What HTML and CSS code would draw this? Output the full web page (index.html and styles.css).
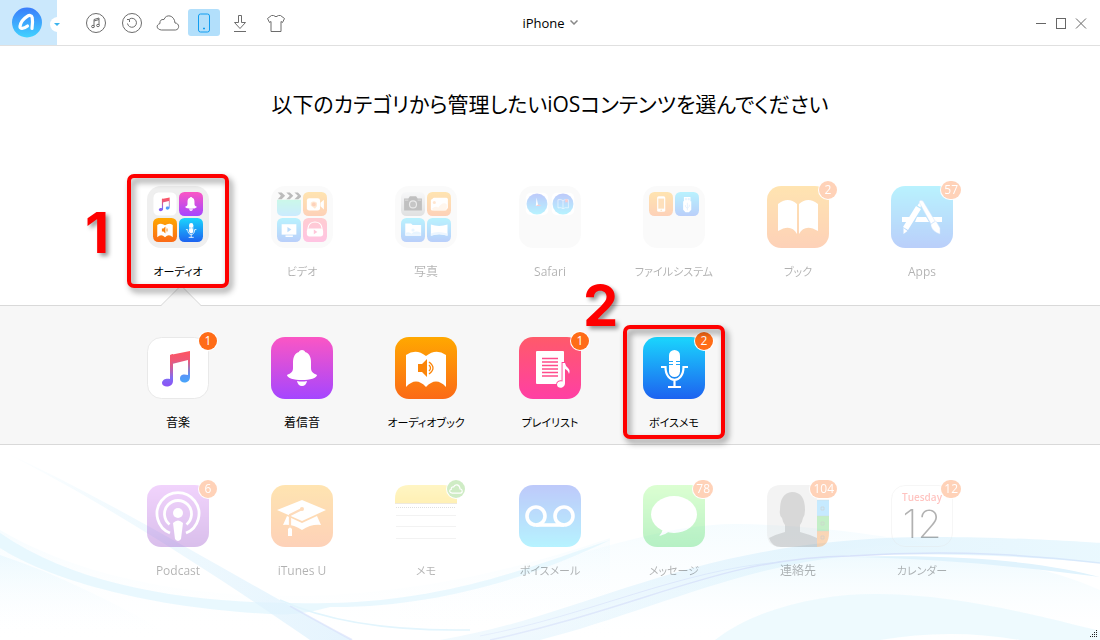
FILE: index.html
```html
<!DOCTYPE html>
<html lang="ja">
<head>
<meta charset="utf-8">
<meta name="viewport" content="width=device-width, initial-scale=1">
<title>iPhone</title>
<link rel="stylesheet" href="styles.css">
</head>
<body>
<svg class="sprite" aria-hidden="true">
  <defs>
    <linearGradient id="g-orange" x2="0" y2="1"><stop stop-color="#ffa800"/><stop offset="1" stop-color="#fb6a17"/></linearGradient>
    <linearGradient id="g-blue" x2="0" y2="1"><stop stop-color="#1ad6fd"/><stop offset="1" stop-color="#1d62f0"/></linearGradient>
    <linearGradient id="g-blue-up" x2="0" y2="1"><stop stop-color="#2a50f0"/><stop offset="1" stop-color="#12d8ff"/></linearGradient>
    <linearGradient id="g-magenta" x2="0" y2="1"><stop stop-color="#fb56c4"/><stop offset="1" stop-color="#a546ff"/></linearGradient>
    <linearGradient id="g-pink" x2="0" y2="1"><stop stop-color="#ff5a6a"/><stop offset="1" stop-color="#ff3fa4"/></linearGradient>
    <linearGradient id="g-purple" x2="0" y2="1"><stop stop-color="#d371f8"/><stop offset="1" stop-color="#832cbf"/></linearGradient>
    <linearGradient id="g-green" x2="0" y2="1"><stop stop-color="#8cff6c"/><stop offset="1" stop-color="#1ed440"/></linearGradient>
    <linearGradient id="g-gray" x2="0" y2="1"><stop stop-color="#e6e8ea"/><stop offset="1" stop-color="#9b9c9e"/></linearGradient>
    <linearGradient id="g-mint" x2="0" y2="1"><stop stop-color="#55e9b8"/><stop offset="1" stop-color="#55bfff"/></linearGradient>
    <linearGradient id="g-yellow" x2="0" y2="1"><stop stop-color="#ffe03e"/><stop offset="1" stop-color="#ffcf0a"/></linearGradient>
    <linearGradient id="g-note" gradientUnits="userSpaceOnUse" x1="31" y1="14" x2="31" y2="48"><stop stop-color="#ff5560"/><stop offset=".35" stop-color="#ee5878"/><stop offset=".8" stop-color="#7f6cf4"/><stop offset="1" stop-color="#8a55f5"/></linearGradient>
    <linearGradient id="g-note2" gradientUnits="userSpaceOnUse" x1="40" y1="14" x2="40" y2="46"><stop stop-color="#ff5560"/><stop offset=".3" stop-color="#ee5878"/><stop offset=".75" stop-color="#5a94f8"/><stop offset="1" stop-color="#45a6fa"/></linearGradient>
    <linearGradient id="g-logo" x2="0" y2="1"><stop stop-color="#3a7cfb"/><stop offset="1" stop-color="#42d2ff"/></linearGradient>
  </defs>
  <symbol id="music" viewBox="0 0 62 62">
    <rect x=".5" y=".5" width="61" height="61" rx="14" fill="#fff" stroke="#e9e9e9"/>
    <path d="M23 18l3-1v27c0 7-11 7-11 2 0-4 5-5 8-4z" fill="url(#g-note)"/>
    <path d="M23 18l20-4v26c0 7-10 7-10 2s4-5 8-4V23l-16 4z" fill="url(#g-note2)"/>
  </symbol>
  <symbol id="bell" viewBox="0 0 62 62">
    <rect width="62" height="62" rx="14" fill="url(#g-magenta)"/>
    <path d="M31 13c-2 0-3 1-3 2-4 1-6 5-6 10v6c0 4-2 5-6 7 0 3 7 5 15 5s15-2 15-5c-4-2-6-3-6-7v-6c0-5-2-9-6-10 0-1-1-2-3-2zM26 44q5 1 10 0-1 5-5 5t-5-5z" fill="#fff"/>
  </symbol>
  <symbol id="audiobook" viewBox="0 0 62 62">
    <rect width="62" height="62" rx="14" fill="url(#g-orange)"/>
    <path d="M11 18q10-7 20 1 10-8 20-1v32q-10-11-20 0-10-11-20 0z" fill="#fff"/>
    <path d="M23 27h4l5-5v18l-5-5h-4z" fill="#fb8509"/>
    <path d="M34 28q3 3 0 6M34 25q8 6 0 12" fill="none" stroke="#fb8509" stroke-width="1.3"/>
  </symbol>
  <symbol id="playlist" viewBox="0 0 62 62">
    <rect width="62" height="62" rx="14" fill="url(#g-pink)"/>
    <rect x="17" y="14" width="28" height="33" rx="1" fill="#fff"/>
    <path d="M23 21.500h16M23 25h16M23 28.500h16M23 32h16M23 35.500h16M23 39h16" stroke="#ff4c8b" stroke-width="1.300"/>
    <path d="M43.500 26h2.500q.5 3 3 5t1 6q-1-4-4-5v14c0 6-8 6-8 1.500 0-3 3-4 5.500-3z" fill="#fff" stroke="#ff4595" stroke-width="1.800" paint-order="stroke"/>
  </symbol>
  <symbol id="mic" viewBox="0 0 62 62">
    <rect width="62" height="62" rx="14" fill="url(#g-blue)"/>
    <rect x="26" y="13" width="11" height="27" rx="5.500" fill="#fff"/>
    <path d="M26 24.500h4M33 24.500h4M26 27.500h4M33 27.500h4" stroke="#1da5f8"/>
    <path d="M18 30h4.500c0 17 18 17 18 0H45M31.500 43v7M25 50h13" fill="none" stroke="#fff" stroke-width="2.200"/>
  </symbol>
  <symbol id="clapper" viewBox="0 0 62 62">
    <path d="M0 20h62v28q0 14-14 14H14Q0 62 0 48z" fill="url(#g-mint)"/>
    <path d="M2 1h10l9 9-9 9H2l8-9zM24 1h9l9 9-9 9h-9l9-9zM45 1h9l8 9v3l-7 6H45l9-9z" fill="#222"/>
  </symbol>
  <symbol id="camcorder" viewBox="0 0 62 62">
    <rect width="62" height="62" rx="14" fill="url(#g-orange)"/>
    <rect x="10" y="16" width="34" height="32" rx="6" fill="#fff"/><path d="M45 28l9-8v25l-9-8z" fill="#fff"/>
    <path d="M20 28q7-7 16 0v8l-5 7-11-8z" fill="#ffb770"/><circle cx="28" cy="32" r="5" fill="#fa6b20"/>
  </symbol>
  <symbol id="tv" viewBox="0 0 62 62">
    <rect width="62" height="62" rx="14" fill="url(#g-blue)"/>
    <rect x="12" y="16" width="38" height="27" fill="#fff"/><path d="M22 45h19v4H22z" fill="#fff"/><path d="M27 23l10 7-10 7z" fill="#1d8cf5"/>
  </symbol>
  <symbol id="headphones" viewBox="0 0 62 62">
    <rect width="62" height="62" rx="14" fill="url(#g-pink)"/>
    <path d="M13 39V26C15 5 47 5 49 26v13" fill="none" stroke="#fff" stroke-width="3"/>
    <rect x="10" y="27" width="42" height="21" rx="7" fill="#fff"/><path d="M28 30l9 6-9 6z" fill="#ff4688"/>
  </symbol>
  <symbol id="camera" viewBox="0 0 62 62">
    <rect width="62" height="62" rx="14" fill="url(#g-gray)"/>
    <path d="M8 17h11l4-6h16l4 6h11v31H8z" fill="#333"/><circle cx="31" cy="32" r="9" fill="#444" stroke="#bbb" stroke-width="3"/><path d="M10 21h9M43 21h9" stroke="#aaa" stroke-width="2"/>
  </symbol>
  <symbol id="photos" viewBox="0 0 62 62">
    <rect width="62" height="62" rx="14" fill="url(#g-orange)"/>
    <rect x="14" y="15" width="40" height="29" rx="4" fill="#fff"/><rect x="10" y="18" width="41" height="30" rx="4" fill="#fff"/>
    <path d="M12 44q11-10 17-3 12-18 22-9v9q0 6-6 6H18z" fill="#ffe2c4"/><circle cx="19" cy="27" r="4" fill="#ffb06a"/>
  </symbol>
  <symbol id="album" viewBox="0 0 62 62">
    <rect width="62" height="62" rx="14" fill="url(#g-blue)"/>
    <path d="M11 14h15l4 4h22v28H11z" fill="#fff"/><path d="M13 38q8-4 14 3 9-10 24-3v5H13z" fill="#b5e0ff"/><circle cx="31" cy="31" r="4" fill="#b5e0ff"/>
  </symbol>
  <symbol id="panorama" viewBox="0 0 62 62">
    <rect width="62" height="62" rx="14" fill="url(#g-blue)"/>
    <path d="M10 17q21 7 43 0v29q-22-8-43 0z" fill="#fff"/><path d="M10 40q16-8 43 0v6q-22-8-43 0z" fill="#c4e4ff"/>
  </symbol>
  <symbol id="compass" viewBox="0 0 62 62">
    <rect x="2" y="2" width="58" height="58" rx="13" fill="#fff"/><circle cx="31" cy="31" r="27" fill="url(#g-blue-up)"/>
    <circle cx="31" cy="31" r="26" fill="none" stroke="#fff" stroke-opacity=".6" stroke-dasharray="1 4"/><path d="M28 36l2-21 4 20z" fill="#fff"/><path d="M28 36l6-4 9 3-12 1z" fill="#ff5555"/>
  </symbol>
  <symbol id="bookmark" viewBox="0 0 62 62">
    <rect x="2" y="2" width="58" height="58" rx="13" fill="#fff"/><circle cx="31" cy="31" r="27" fill="url(#g-blue-up)"/>
    <path d="M18 20q8-2 13 2 6-4 14-2v21q-8-2-14 2-5-4-13-2zM31 22v21" fill="none" stroke="#fff" stroke-opacity=".7" stroke-width="2"/><path d="M37 19h6v9l-3-3-3 3z" fill="#ff5555"/>
  </symbol>
  <symbol id="phone" viewBox="0 0 62 62">
    <rect width="62" height="62" rx="14" fill="url(#g-orange)"/><rect x="21" y="11" width="21" height="40" rx="4" fill="#fff"/><path d="M24 17h15v26H24z" fill="#fc9c25"/><circle cx="31.500" cy="47" r="2" fill="#fc9c25"/>
  </symbol>
  <symbol id="usb" viewBox="0 0 62 62">
    <rect width="62" height="62" rx="14" fill="url(#g-blue)"/><path d="M23 13h17v11h2v22l-6 6h-9l-6-6V24h2z" fill="#fff"/><path d="M27 17h3v3h-3zM34 17h3v3h-3zM32 28v19M27 34v4l5 4 5-5v-4" fill="none" stroke="#9fcdfa" stroke-width="2"/>
  </symbol>
  <symbol id="book" viewBox="0 0 62 62">
    <rect width="62" height="62" rx="14" fill="url(#g-orange)"/>
    <path d="M11 18q10-8 19 0v30q-6-11-19-3zM32 18q9-8 19 0v27q-13-8-19 3z" fill="#fff"/>
  </symbol>
  <symbol id="apps" viewBox="0 0 62 62">
    <rect width="62" height="62" rx="14" fill="url(#g-blue)"/>
    <path d="M11 31h12l-2 5H11zM26 31h9l3 5H24zM39 31h12v5h-9z" fill="#fff"/>
    <path d="M25 20l5 3-13 21-5-3zM12.500 42l4 3-4 3zM26.500 19.500l2-3 2 1-1 4z" fill="#fff"/>
    <path d="M28 16q1-3 4-1l12 20-4 3zM40 38l5-3 4 7v6q-7-2-9-8z" fill="#fff" stroke="#6caaf8" stroke-width=".5"/>
  </symbol>
  <symbol id="podcast" viewBox="0 0 62 62">
    <rect width="62" height="62" rx="14" fill="url(#g-purple)"/>
    <path d="M23 48a21 21 0 1 1 16 0M22.500 39.500a13.500 13.500 0 1 1 17 0" fill="none" stroke="#fff" stroke-width="2.800"/>
    <circle cx="31" cy="28" r="5" fill="#fff"/><path d="M26 38q5-5 10 0l-2 16q-3 4-6 0z" fill="#fff"/>
  </symbol>
  <symbol id="itunesu" viewBox="0 0 62 62">
    <rect width="62" height="62" rx="14" fill="url(#g-orange)"/>
    <path d="M6 25l25-10 24 10-24 11zM12 40l4-9 15 7 15-7 4 9q-10-1-19 5-9-6-19-5z" fill="#fff"/>
    <path d="M31 24l-12 6v13" fill="none" stroke="#fc8c20" stroke-width="2.200"/><circle cx="31" cy="24" r="2" fill="#fc8c20"/><path d="M17 44q2-3 4 0v7h-4z" fill="#fff"/>
  </symbol>
  <symbol id="notes" viewBox="0 0 62 62">
    <path d="M14 0h34q14 0 14 14v34q0 14-14 14H14Q0 62 0 48V14Q0 0 14 0z" fill="#fff"/>
    <path d="M14 0h34q14 0 14 14v5H0v-5Q0 0 14 0z" fill="url(#g-yellow)"/>
    <path d="M0 18.500h62" stroke="#c9b890"/><path d="M1 22.500h60" stroke="#999" stroke-dasharray="1 1"/><path d="M1 30.500h60M1 41.500h60M1 53.500h60" stroke="#d5d5d5"/>
  </symbol>
  <symbol id="voicemail" viewBox="0 0 62 62">
    <rect width="62" height="62" rx="14" fill="url(#g-blue-up)"/>
    <circle cx="17" cy="31" r="9" fill="none" stroke="#fff" stroke-width="3.600"/><circle cx="45" cy="31" r="9" fill="none" stroke="#fff" stroke-width="3.600"/><path d="M17 40h28" stroke="#fff" stroke-width="3.600"/>
  </symbol>
  <symbol id="message" viewBox="0 0 62 62">
    <rect width="62" height="62" rx="14" fill="url(#g-green)"/>
    <ellipse cx="31" cy="29.500" rx="23" ry="18.500" fill="#fff"/><path d="M20 44q-1 4-4 7 6-1 11-5z" fill="#fff"/>
  </symbol>
  <symbol id="contact" viewBox="0 0 62 62">
    <path d="M14 0h34q2 0 2 2v60H14Q0 62 0 48V14Q0 0 14 0z" fill="#d8d8d8"/>
    <path d="M2 53q8-4 16-6v-7q-2-2-3-7-3-3-2-8 0-17 12-18 13 0 13 18 0 5-2 8-1 5-3 7v7q8 2 17 6v9H14Q5 62 2 53z" fill="#808080"/>
    <path d="M50 15h12v16H50z" fill="#45bdff"/><path d="M50 31h12v15H50z" fill="#40cc48"/><path d="M50 46h12v2q0 14-12 14z" fill="#ff7d10"/>
    <path d="M50 15h12M50 31h12M50 46h12" stroke="#777" stroke-opacity=".4"/><path d="M54 22h3v3h-3zM54 37h3v3h-3zM54 51h3v3h-3z" fill="none" stroke="#666" stroke-opacity=".6"/>
  </symbol>
</svg>

<header class="topbar">
  <div class="topbar-left">
    <button class="brand" type="button" aria-label="メニュー">
      <svg width="57" height="45" viewBox="0 0 57 45">
        <circle cx="27" cy="22.500" r="15" fill="url(#g-logo)"/>
        <path d="M32 28.500c.6-4 .8-8 .2-11-.5-2.500-3-2.500-5-1.200-3.500 2.200-6.700 6.500-7.200 10-.3 3 3.500 2.800 7.500-.3" fill="none" stroke="#fff" stroke-width="3.200" stroke-linecap="round" stroke-linejoin="round"/>
        <circle cx="57.500" cy="24.500" r="7.500" fill="#fff"/>
      </svg>
      <span class="brand-caret"></span>
    </button>
    <nav class="tools" aria-label="ツール">
      <button class="tool" type="button" aria-label="音楽"><svg viewBox="0 0 24 24"><circle cx="12" cy="12" r="9.500"/><path d="M10 15.500V8.500l5-1.500v7M10 10l5-1.500"/><ellipse cx="9" cy="15.500" rx="1.400" ry="1.200"/><ellipse cx="14" cy="14.500" rx="1.400" ry="1.200"/></svg></button>
      <button class="tool" type="button" aria-label="履歴"><svg viewBox="0 0 24 24"><circle cx="12" cy="12" r="9.500"/><path d="M7.500 12.500a4.500 4.500 0 1 0 2-4.500M7 8.500h2.500V11"/></svg></button>
      <button class="tool" type="button" aria-label="クラウド"><svg viewBox="0 0 24 24"><path d="M5.500 19h14c4.500-.5 4-7-.5-7C18.500 4 10 2.500 8 8.500 5 8 3.500 10 4 12.500-.500 14 .5 18.500 5.500 19z"/></svg></button>
      <button class="tool tool-active" type="button" aria-label="デバイス" aria-pressed="true"><svg viewBox="0 0 24 24"><rect x="6.500" y="3" width="11" height="18" rx="2"/><path d="M11.500 17h1v1h-1z"/></svg></button>
      <button class="tool" type="button" aria-label="ダウンロード"><svg viewBox="0 0 24 24"><path d="M10.500 4.500h3v7h4L12 17.500l-5.500-6h4zM6 20.500h12"/></svg></button>
      <button class="tool" type="button" aria-label="テーマ"><svg viewBox="0 0 24 24"><path d="M7.500 4.500h2q2.500 2.500 5 0h2l4 3-2 4-1.500-1v10H7v-10l-1.500 1-2-4z"/></svg></button>
    </nav>
  </div>
  <button class="device" type="button">iPhone <svg width="8" height="5" viewBox="0 0 8 5"><path d="M.500.500L4 4 7.500.500" fill="none" stroke="#888" stroke-width="1.500"/></svg></button>
  <div class="window-controls">
    <button type="button" aria-label="最小化"><svg viewBox="0 0 12 12"><path d="M1 6.500h10"/></svg></button>
    <button type="button" aria-label="最大化"><svg viewBox="0 0 12 12"><rect x="1.500" y="1.500" width="9" height="10"/></svg></button>
    <button type="button" aria-label="閉じる"><svg viewBox="0 0 12 12"><path d="M1 1.500l10 10M11 1.500l-10 10"/></svg></button>
  </div>
</header>

<main class="content">
  <svg class="waves" viewBox="0 0 1100 190" preserveAspectRatio="none" aria-hidden="true">
    <defs>
      <linearGradient id="w1" x2="0" y2="1"><stop stop-color="#dff5fe"/><stop offset="1" stop-color="#fff" stop-opacity="0"/></linearGradient>
      <linearGradient id="w2"><stop stop-color="#d5f1fd" stop-opacity="0"/><stop offset=".4" stop-color="#dff3fd" stop-opacity=".6"/><stop offset="1" stop-color="#dff1fd"/></linearGradient>
      <linearGradient id="w3"><stop stop-color="#e0f3fd" stop-opacity=".5"/><stop offset=".6" stop-color="#e0f3fd"/><stop offset="1" stop-color="#e6f7fe"/></linearGradient>
      <linearGradient id="w4"><stop stop-color="#d3dcf9" stop-opacity=".6"/><stop offset=".6" stop-color="#d3dcf9"/><stop offset="1" stop-color="#d3e6fb"/></linearGradient>
    </defs>
    <path d="M0 80C110 145 330 185 610 88V190H0z" fill="url(#w1)" opacity=".25"/>
    <path d="M0 105C60 125 120 155 180 190H0z" fill="url(#w1)" opacity=".5"/>
    <path d="M0 83C90 145 220 155 330 153 450 150 530 117 610 90 540 124 440 158 330 157 300 165 285 165 270 164 150 158 50 130 0 98z" fill="#e4f6fe" opacity=".8"/>
    <path d="M0 0C120 55 240 130 352 190H310C230 135 110 55 0 0z" fill="url(#w2)" opacity=".8"/>
    <path d="M290 156Q315 170 352 190" fill="none" stroke="#d5ddfa" stroke-width="2" opacity=".6"/>
    <path d="M280 150Q350 182 470 180" fill="none" stroke="#e2f5fd" stroke-width="1.500"/>
    <path d="M400 150C550 120 650 72 740 74 820 76 870 84 930 94 760 95 600 158 400 190z" fill="url(#w1)" opacity=".3"/>
    <path d="M440 190C590 165 690 90 920 87 1000 86 1100 93 1100 93V113C1030 107 960 102 850 106 740 116 640 165 540 190z" fill="url(#w3)" opacity=".85"/>
    <path d="M460 190C650 155 720 108 850 106 1000 107 1040 115 1100 140V190z" fill="url(#w1)" opacity=".5"/>
    <path d="M850 107C980 103 1060 116 1100 127 1030 118 940 108 850 107z" fill="#e0f3fd"/>
    <path d="M490 190C650 155 720 108 850 106 960 99 1040 106 1100 113" fill="none" stroke="url(#w4)" stroke-width="1.500" opacity=".8"/>
    <path d="M480 186C590 165 680 120 780 112" fill="none" stroke="url(#w4)" opacity=".6"/>
    <path d="M715 190C760 155 830 143 880 144 960 145 1040 166 1100 181V190H1020Q950 178 880 190z" fill="#ecf9fe" opacity=".9"/>
  </svg>

  <h1 class="heading">以下のカテゴリから管理したいiOSコンテンツを選んでください</h1>

  <section class="row row-first">
    <button class="item item-open" type="button"><span class="tile folder"><svg><use href="#music"/></svg><svg><use href="#bell"/></svg><svg><use href="#audiobook"/></svg><svg><use href="#mic"/></svg></span><span class="label kana">オーディオ</span>
      <svg class="pointer" width="40" height="21" viewBox="0 0 40 21"><path d="M0 21L20 0l20 21z" fill="#f7f7f7"/><path d="M0 20.500L20 .500l20 20" fill="none" stroke="#d5d5d5"/></svg>
      <span class="mark"></span><span class="step step-one">1</span></button>
    <button class="item faded" type="button"><span class="tile folder"><svg><use href="#clapper"/></svg><svg><use href="#camcorder"/></svg><svg><use href="#tv"/></svg><svg><use href="#headphones"/></svg></span><span class="label kana">ビデオ</span></button>
    <button class="item faded" type="button"><span class="tile folder"><svg><use href="#camera"/></svg><svg><use href="#photos"/></svg><svg><use href="#album"/></svg><svg><use href="#panorama"/></svg></span><span class="label">写真</span></button>
    <button class="item faded" type="button"><span class="tile folder"><svg><use href="#compass"/></svg><svg><use href="#bookmark"/></svg></span><span class="label">Safari</span></button>
    <button class="item faded" type="button"><span class="tile folder"><svg><use href="#phone"/></svg><svg><use href="#usb"/></svg></span><span class="label kana">ファイルシステム</span></button>
    <button class="item faded" type="button"><span class="tile"><svg><use href="#book"/></svg><span class="badge">2</span></span><span class="label kana">ブック</span></button>
    <button class="item faded" type="button"><span class="tile"><svg><use href="#apps"/></svg><span class="badge">57</span></span><span class="label">Apps</span></button>
  </section>

  <section class="panel">
    <div class="row">
      <button class="item" type="button"><span class="tile"><svg><use href="#music"/></svg><span class="badge">1</span></span><span class="label">音楽</span></button>
      <button class="item" type="button"><span class="tile"><svg><use href="#bell"/></svg></span><span class="label">着信音</span></button>
      <button class="item" type="button"><span class="tile"><svg><use href="#audiobook"/></svg></span><span class="label kana">オーディオブック</span></button>
      <button class="item" type="button"><span class="tile"><svg><use href="#playlist"/></svg><span class="badge">1</span></span><span class="label kana">プレイリスト</span></button>
      <button class="item" type="button"><span class="tile"><svg><use href="#mic"/></svg><span class="badge">2</span></span><span class="label kana">ボイスメモ</span><span class="mark"></span><span class="step step-two">2</span></button>
    </div>
  </section>

  <section class="row row-last">
    <button class="item faded" type="button"><span class="tile"><svg><use href="#podcast"/></svg><span class="badge">6</span></span><span class="label">Podcast</span></button>
    <button class="item faded" type="button"><span class="tile"><svg><use href="#itunesu"/></svg></span><span class="label">iTunes U</span></button>
    <button class="item faded" type="button"><span class="tile"><svg><use href="#notes"/></svg><span class="badge badge-cloud"><svg viewBox="0 0 24 24"><path d="M5.500 19h14c4.500-.5 4-7-.5-7C18.500 4 10 2.500 8 8.500 5 8 3.500 10 4 12.500-.500 14 .5 18.500 5.500 19z" fill="none" stroke="#fff" stroke-width="2"/></svg></span></span><span class="label kana">メモ</span></button>
    <button class="item faded" type="button"><span class="tile"><svg><use href="#voicemail"/></svg></span><span class="label kana">ボイスメール</span></button>
    <button class="item faded" type="button"><span class="tile"><svg><use href="#message"/></svg><span class="badge">78</span></span><span class="label kana">メッセージ</span></button>
    <button class="item faded" type="button"><span class="tile"><svg><use href="#contact"/></svg><span class="badge">104</span></span><span class="label">連絡先</span></button>
    <button class="item faded" type="button"><span class="tile calendar"><span class="weekday">Tuesday</span><span class="day">12</span><span class="badge">12</span></span><span class="label kana">カレンダー</span></button>
  </section>
  <svg class="grip" width="8" height="8" viewBox="0 0 8 8" aria-hidden="true"><path d="M6 0h1v1H6zM6 2h1v1H6zM4 2h1v1H4zM6 4h1v1H6zM4 4h1v1H4zM2 4h1v1H2zM6 6h1v1H6zM4 6h1v1H4zM2 6h1v1H2zM0 6h1v1H0z" fill="#222"/></svg>
</main>
</body>
</html>
```
FILE: styles.css
```css
* { box-sizing: border-box; }

body {
  margin: 0;
  min-height: 100vh;
  display: flex;
  flex-direction: column;
  background: #fff;
  color: #000;
  font-family: "Open Sans", "Noto Sans CJK JP", sans-serif;
  font-size: 12px;
}

button {
  padding: 0;
  border: 0;
  background: none;
  color: inherit;
  font: inherit;
  cursor: pointer;
}

.sprite { position: absolute; width: 0; height: 0; }

/* Top bar */
.topbar {
  display: grid;
  grid-template-columns: 1fr auto 1fr;
  align-items: center;
  height: 46px;
  border-bottom: 1px solid #e0e0e0;
}
.topbar-left { display: flex; align-items: center; gap: 23px; }
.brand { position: relative; display: flex; height: 45px; background: #cbe8fc; }
.brand-caret {
  position: absolute;
  right: -3px;
  top: 23px;
  border: 3px solid transparent;
  border-top-color: #3cb4ee;
  border-bottom: 0;
}
.tools { display: flex; gap: 4px; }
.tool {
  display: flex;
  align-items: center;
  justify-content: center;
  width: 32px;
  height: 27px;
  border-radius: 3px;
}
.tool svg {
  width: 24px;
  height: 24px;
  overflow: visible;
  fill: none;
  stroke: #6c6c6c;
  stroke-width: 1;
}
.tool-active { background: #b2dffb; }
.tool-active svg { stroke: #119df0; }
.device { display: flex; align-items: center; gap: 5px; font-size: 13px; }
.window-controls {
  display: flex;
  justify-content: flex-end;
  gap: 8px;
  padding-right: 13px;
}
.window-controls button { display: flex; }
.window-controls svg { width: 12px; height: 12px; fill: none; stroke: #666; }

/* Category area */
.content {
  position: relative;
  flex: 1;
  display: flex;
  flex-direction: column;
  isolation: isolate;
}
.waves {
  position: absolute;
  z-index: -1;
  left: 0;
  bottom: 0;
  width: 100%;
  height: 190px;
}
.heading {
  margin: 42px 0 66px;
  font-size: 21px;
  font-weight: 400;
  line-height: 32px;
  text-align: center;
  font-feature-settings: "palt";
}
.row {
  display: grid;
  grid-template-columns: repeat(7, 1fr);
  width: 100%;
  max-width: 868px;
  margin: 0 auto;
}
.row-first { padding-bottom: 24px; }
.row-last { padding: 40px 0; }
.panel {
  padding: 31px 0 12px;
  border-top: 1px solid #d9d9d9;
  border-bottom: 1px solid #d9d9d9;
  background: #f7f7f7;
}

.item {
  position: relative;
  display: flex;
  flex-direction: column;
  align-items: center;
  gap: 15px;
}
.faded .tile, .faded .label { opacity: .3; }
.tile { position: relative; width: 62px; height: 62px; }
.tile > svg { display: block; width: 62px; height: 62px; }
.folder {
  display: grid;
  grid-template-columns: 24px 24px;
  grid-template-rows: 24px 24px;
  gap: 2px;
  padding: 6px;
  border-radius: 14px;
  background: #efefef;
}
.folder > svg { width: 24px; height: 24px; }
.label {
  line-height: 18px;
  white-space: nowrap;
  font-feature-settings: "palt";
}
.kana { font-size: 11px; }
.badge {
  position: absolute;
  top: -5px;
  right: -8px;
  min-width: 18px;
  height: 18px;
  padding: 0 3px;
  border-radius: 9px;
  background: #ff6c17;
  box-shadow: 0 0 0 1px #fff;
  color: #fff;
  line-height: 18px;
  text-align: center;
}
.badge-cloud { padding: 2px; background: #62c142; }
.badge-cloud svg { display: block; width: 14px; height: 14px; overflow: visible; }

.calendar {
  display: flex;
  flex-direction: column;
  align-items: center;
  padding-top: 4px;
  border: 1px solid #e2e2e2;
  border-radius: 14px;
}
.calendar .badge { top: -6px; right: -9px; }
.weekday { color: #ff3b30; font-size: 10px; font-weight: 600; line-height: 14px; }
.day { font-family: Inter, sans-serif; font-size: 39px; font-weight: 200; line-height: 40px; }

/* Step marks laid over the icons */
.pointer { position: absolute; left: 45px; bottom: -25px; }
.mark {
  position: absolute;
  z-index: 1;
  top: -12px;
  left: 11px;
  right: 11px;
  height: 114px;
  border: 4px solid #fe0000;
  border-radius: 7px;
  filter: drop-shadow(3px 4px 3px rgba(0, 0, 0, .45));
}
.step {
  position: absolute;
  z-index: 1;
  color: #fe0000;
  font-family: Inter, sans-serif;
  font-size: 56px;
  font-weight: 700;
  line-height: 56px;
  text-shadow: 3px 3px 4px rgba(0, 0, 0, .4);
}
.step-one { left: -31px; top: 19px; }
.step-two { left: -29px; top: -59px; }

.grip { position: absolute; right: 2px; bottom: 2px; }
```
